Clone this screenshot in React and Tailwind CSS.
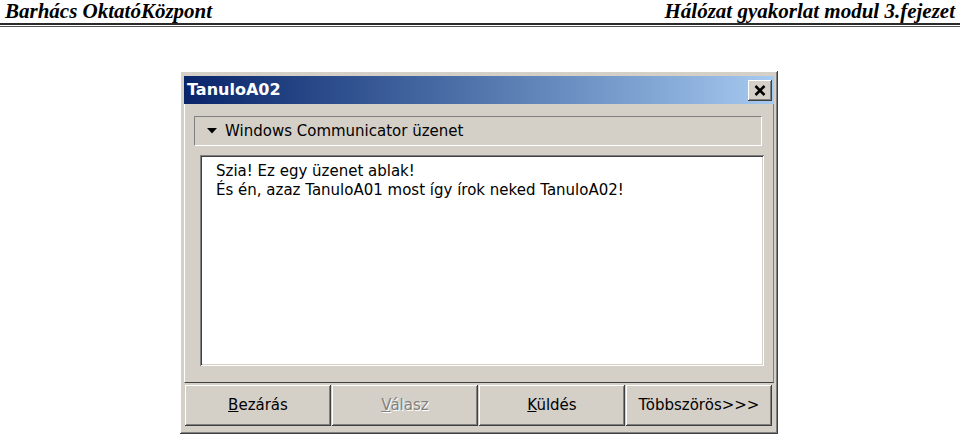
import React from "react";

const bevelOut =
    "shadow-[inset_-1px_-1px_#404040,inset_1px_1px_#ffffff,inset_-2px_-2px_#808080,inset_2px_2px_#d4d0c8]";
const bevelIn =
    "shadow-[inset_1px_1px_#808080,inset_-1px_-1px_#ffffff,inset_2px_2px_#404040,inset_-2px_-2px_#d4d0c8]";

function Btn({ children, disabled }) {
    return (
        <div
            className={`flex items-center justify-center bg-[#d4d0c8] ${bevelOut} ${
                disabled ? "text-[#808080] [text-shadow:1px_1px_#ffffff]" : "text-black"
            }`}
        >
            {children}
        </div>
    );
}

export default function App() {
    return (
        <div className="w-[960px] h-[436px] bg-white overflow-hidden">
            <div className="flex justify-between items-start px-[5px] h-[22px] font-['Liberation_Serif',serif] font-bold italic text-[21px] leading-[22px] text-black">
                <span>Barhács OktatóKözpont</span>
                <span>Hálózat gyakorlat modul 3.fejezet</span>
            </div>
            <div className="h-[2px] mt-[1px] bg-[#2a2a2a]" />
            <div className="h-[1px] mt-[1px] bg-[#555555]" />

            <div
                className={`ml-[180px] mt-[44px] w-[598px] h-[363px] bg-[#d4d0c8] ${bevelOut} pt-[5px] px-[4px] pb-[8px] flex flex-col font-['DejaVu_Sans',sans-serif] text-[15px]`}
            >
                <div className="h-[28px] shrink-0 flex items-center justify-between pl-[3px] pr-[2px] bg-gradient-to-r from-[#0a246a] to-[#a6caf0]">
                    <span className="text-white font-bold text-[16px] leading-none">TanuloA02</span>
                    <div className={`w-[24px] h-[21px] flex items-center justify-center bg-[#d4d0c8] ${bevelOut}`}>
                        <svg width="12" height="11" viewBox="0 0 12 11">
                            <path d="M1.5 1 L10.5 10 M10.5 1 L1.5 10" stroke="#000" strokeWidth="2.6" />
                        </svg>
                    </div>
                </div>

                <div className="flex-1 flex flex-col border-l border-white border-r border-b border-r-[#808080] border-b-[#404040] pt-[12px] pb-[16px]">
                    <div className="ml-[9px] mr-[11px] h-[30px] flex items-center gap-[8px] pl-[12px] border border-t-[#808080] border-l-[#808080] border-b-white border-r-white">
                        <svg width="10" height="6" viewBox="0 0 10 6">
                            <path d="M0 0 H10 L5 5.5 Z" fill="#000" />
                        </svg>
                        <span className="text-black leading-none">Windows Communicator üzenet</span>
                    </div>
                    <div className={`ml-[15px] mr-[9px] mt-[9px] flex-1 bg-white ${bevelIn} pt-[7px] pl-[16px] text-black leading-[19px]`}>
                        <p>Szia! Ez egy üzenet ablak!</p>
                        <p>És én, azaz TanuloA01 most így írok neked TanuloA02!</p>
                    </div>
                </div>

                <div className="h-[41px] mt-[2px] ml-[1px] mr-[2px] shrink-0 grid grid-cols-4 gap-[1px]">
                    <Btn>
                        <span><span className="underline">B</span>ezárás</span>
                    </Btn>
                    <Btn disabled>
                        <span><span className="underline">V</span>álasz</span>
                    </Btn>
                    <Btn>
                        <span><span className="underline">K</span>üldés</span>
                    </Btn>
                    <Btn>
                        <span>Többszörös&gt;&gt;&gt;</span>
                    </Btn>
                </div>
            </div>
        </div>
    );
}
